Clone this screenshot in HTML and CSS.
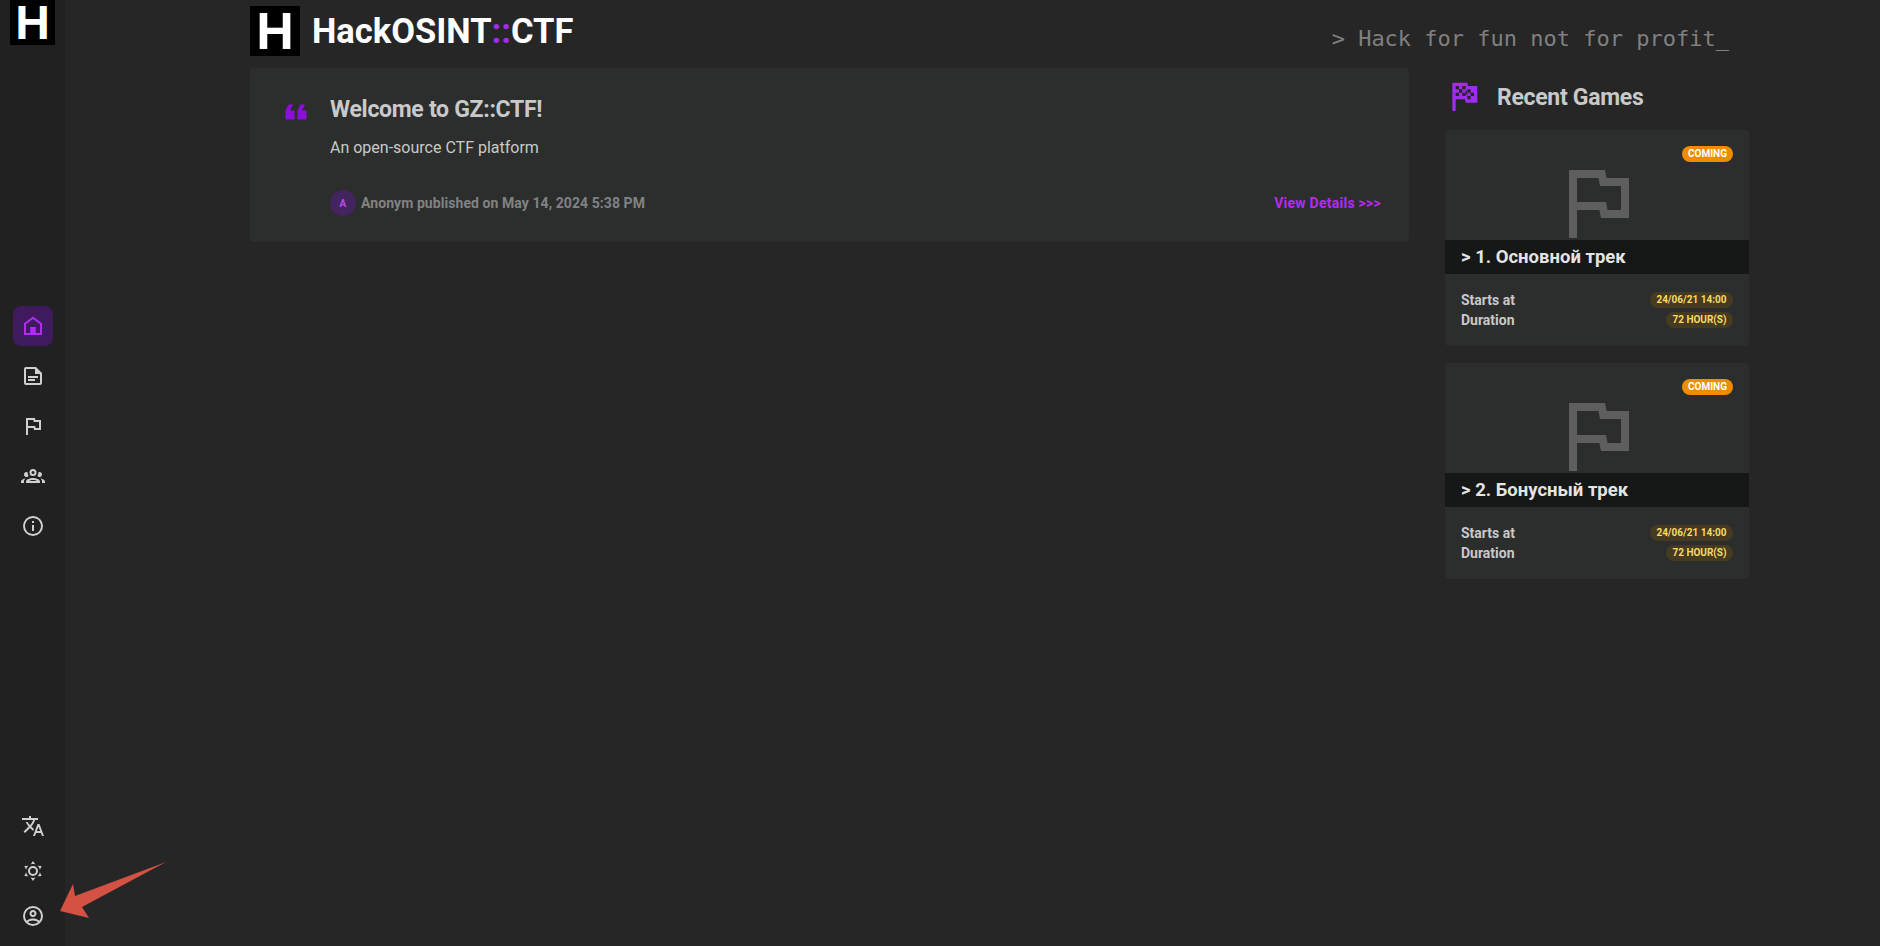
FILE: index.html
```html
<!DOCTYPE html>
<html lang="en">
<head>
  <meta charset="UTF-8">
  <meta name="viewport" content="width=device-width, initial-scale=1.0">
  <title>HackOSINT::CTF</title>
  <link rel="stylesheet" href="styles.css">
</head>
<body>
  <!-- Sidebar -->
  <nav class="sidebar">
    <div class="side-logo"><span>H</span></div>

    <div class="side-menu">
      <a class="side-btn active" href="#">
        <svg viewBox="0 0 24 24"><path fill-rule="evenodd" d="M12 2.5L21 9.2V21H3V9.2L12 2.5M12 5L5 10.2V19H9.5V13H14.5V19H19V10.2L12 5Z"/><path d="M9.5 13H14.5V19H9.5Z"/></svg>
      </a>
      <a class="side-btn" href="#">
        <svg viewBox="0 0 24 24"><path d="M15,3H5A2,2 0 0,0 3,5V19A2,2 0 0,0 5,21H19A2,2 0 0,0 21,19V9L15,3M19,19H5V5H14V10H19M17,14H7V12H17M14,17H7V15H14"/></svg>
      </a>
      <a class="side-btn" href="#">
        <svg viewBox="0 0 24 24"><path d="M12.36,6L12.76,8H18V14H14.64L14.24,12H7V6H12.36M14,4H5V21H7V14H12.6L13,16H20V6H14.4"/></svg>
      </a>
      <a class="side-btn" href="#">
        <svg viewBox="0 0 24 24"><path d="M12,5A3.5,3.5 0 0,0 8.5,8.5A3.5,3.5 0 0,0 12,12A3.5,3.5 0 0,0 15.5,8.5A3.5,3.5 0 0,0 12,5M12,7A1.5,1.5 0 0,1 13.5,8.5A1.5,1.5 0 0,1 12,10A1.5,1.5 0 0,1 10.5,8.5A1.5,1.5 0 0,1 12,7M5.5,8A2.5,2.5 0 0,0 3,10.5C3,11.44 3.53,12.25 4.29,12.68C4.65,12.88 5.06,13 5.5,13C5.94,13 6.35,12.88 6.71,12.68C7.08,12.47 7.39,12.17 7.62,11.81C6.89,10.86 6.5,9.7 6.5,8.5C6.5,8.41 6.5,8.31 6.5,8.22C6.2,8.08 5.86,8 5.5,8M18.5,8C18.14,8 17.8,8.08 17.5,8.22C17.5,8.31 17.5,8.41 17.5,8.5C17.5,9.7 17.11,10.86 16.38,11.81C16.5,12 16.63,12.15 16.78,12.3C16.94,12.45 17.1,12.58 17.29,12.68C17.65,12.88 18.06,13 18.5,13C18.94,13 19.35,12.88 19.71,12.68C20.47,12.25 21,11.44 21,10.5A2.5,2.5 0 0,0 18.5,8M12,14C9.66,14 5,15.17 5,17.5V19H19V17.5C19,15.17 14.34,14 12,14M4.71,14.55C2.78,14.78 0,15.76 0,17.5V19H3V17.07C3,16.06 3.69,15.22 4.71,14.55M19.29,14.55C20.31,15.22 21,16.06 21,17.07V19H24V17.5C24,15.76 21.22,14.78 19.29,14.55M12,16C13.53,16 15.24,16.5 16.23,17H7.77C8.76,16.5 10.47,16 12,16Z"/></svg>
      </a>
      <a class="side-btn" href="#">
        <svg viewBox="0 0 24 24"><path d="M11,9H13V7H11M12,20C7.59,20 4,16.41 4,12C4,7.59 7.59,4 12,4C16.41,4 20,7.59 20,12C20,16.41 16.41,20 12,20M12,2A10,10 0 0,0 2,12A10,10 0 0,0 12,22A10,10 0 0,0 22,12A10,10 0 0,0 12,2M11,17H13V11H11V17Z"/></svg>
      </a>
    </div>

    <div class="side-bottom">
      <a class="side-btn small" href="#">
        <svg viewBox="0 0 24 24"><path d="M12.87,15.07L10.33,12.56L10.36,12.53C12.1,10.59 13.34,8.36 14.07,6H17V4H10V2H8V4H1V6H12.17C11.5,7.92 10.44,9.75 9,11.35C8.07,10.32 7.3,9.19 6.69,8H4.69C5.42,9.63 6.42,11.17 7.67,12.56L2.58,17.58L4,19L9,14L12.11,17.11L12.87,15.07M18.5,10H16.5L12,22H14L15.12,19H19.87L21,22H23L18.5,10M15.88,17L17.5,12.67L19.12,17H15.88Z"/></svg>
      </a>
      <a class="side-btn small" href="#">
        <svg viewBox="0 0 24 24"><path d="M12,7A5,5 0 0,1 17,12A5,5 0 0,1 12,17A5,5 0 0,1 7,12A5,5 0 0,1 12,7M12,9A3,3 0 0,0 9,12A3,3 0 0,0 12,15A3,3 0 0,0 15,12A3,3 0 0,0 12,9M12,2L14.39,5.42C13.65,5.15 12.84,5 12,5C11.16,5 10.35,5.15 9.61,5.42L12,2M3.34,7L7.5,6.65C6.9,7.16 6.36,7.78 5.94,8.5C5.5,9.24 5.25,10 5.11,10.79L3.34,7M3.36,17L5.12,13.23C5.26,14 5.53,14.78 5.95,15.5C6.37,16.24 6.91,16.86 7.5,17.37L3.36,17M20.65,7L18.88,10.79C18.74,10 18.47,9.23 18.05,8.5C17.63,7.78 17.1,7.15 16.5,6.64L20.65,7M20.64,17L16.5,17.36C17.09,16.85 17.62,16.22 18.04,15.5C18.46,14.77 18.73,14 18.87,13.21L20.64,17M12,22L9.59,18.56C10.33,18.83 11.14,19 12,19C12.82,19 13.63,18.83 14.37,18.56L12,22Z"/></svg>
      </a>
      <a class="side-btn small" href="#">
        <svg viewBox="0 0 24 24"><path d="M12,2A10,10 0 0,0 2,12A10,10 0 0,0 12,22A10,10 0 0,0 22,12A10,10 0 0,0 12,2M7.07,18.28C7.5,17.38 10.12,16.5 12,16.5C13.88,16.5 16.5,17.38 16.93,18.28C15.57,19.36 13.86,20 12,20C10.14,20 8.43,19.36 7.07,18.28M18.36,16.83C16.93,15.09 13.46,14.5 12,14.5C10.54,14.5 7.07,15.09 5.64,16.83C4.62,15.5 4,13.82 4,12C4,7.59 7.59,4 12,4C16.41,4 20,7.59 20,12C20,13.82 19.38,15.5 18.36,16.83M12,6C10.06,6 8.5,7.56 8.5,9.5C8.5,11.44 10.06,13 12,13C13.94,13 15.5,11.44 15.5,9.5C15.5,7.56 13.94,6 12,6M12,11A1.5,1.5 0 0,1 10.5,9.5A1.5,1.5 0 0,1 12,8A1.5,1.5 0 0,1 13.5,9.5A1.5,1.5 0 0,1 12,11Z"/></svg>
      </a>
    </div>
  </nav>

  <main class="page">
    <!-- Header -->
    <header class="top">
      <div class="brand">
        <div class="brand-logo"><span>H</span></div>
        <h1>HackOSINT<span class="accent">::</span>CTF</h1>
      </div>
      <div class="motto">&gt; Hack for fun not for profit_</div>
    </header>

    <div class="columns">
      <!-- News -->
      <section class="news">
        <article class="post">
          <svg class="quote" viewBox="0 0 24 24"><path d="M10,7L8,11H11V17H5V11L7,7H10M18,7L16,11H19V17H13V11L15,7H18Z"/></svg>
          <div class="post-body">
            <h2>Welcome to GZ::CTF!</h2>
            <p>An open-source CTF platform</p>
            <div class="post-foot">
              <div class="author">
                <span class="avatar">A</span>
                <span>Anonym published on May 14, 2024 5:38 PM</span>
              </div>
              <a class="details" href="#">View Details &gt;&gt;&gt;</a>
            </div>
          </div>
        </article>
      </section>

      <!-- Recent games -->
      <aside class="recent">
        <div class="recent-title">
          <svg viewBox="0 0 24 24"><path d="M14.4,6H20V16H13L12.6,14H7V21H5V4H14L14.4,6M14,14H16V12H18V10H16V8H14V10L13,8V6H11V8H9V6H7V8H9V10H7V12H9V10H11V12H13V10L14,12V14M11,10V8H13V10H11M14,10H16V12H14V10Z"/></svg>
          <h3>Recent Games</h3>
        </div>

        <div class="game">
          <div class="poster">
            <svg class="poster-flag" viewBox="0 0 24 24"><path d="M12.36,6L12.76,8H18V14H14.64L14.24,12H7V6H12.36M14,4H5V21H7V14H12.6L13,16H20V6H14.4"/></svg>
            <span class="status">Coming</span>
            <div class="game-name">&gt; 1. Основной трек</div>
          </div>
          <div class="game-info">
            <div class="row"><span>Starts at</span><span class="pill">24/06/21 14:00</span></div>
            <div class="row"><span>Duration</span><span class="pill">72 HOUR(S)</span></div>
          </div>
        </div>

        <div class="game">
          <div class="poster">
            <svg class="poster-flag" viewBox="0 0 24 24"><path d="M12.36,6L12.76,8H18V14H14.64L14.24,12H7V6H12.36M14,4H5V21H7V14H12.6L13,16H20V6H14.4"/></svg>
            <span class="status">Coming</span>
            <div class="game-name">&gt; 2. Бонусный трек</div>
          </div>
          <div class="game-info">
            <div class="row"><span>Starts at</span><span class="pill">24/06/21 14:00</span></div>
            <div class="row"><span>Duration</span><span class="pill">72 HOUR(S)</span></div>
          </div>
        </div>
      </aside>
    </div>
  </main>

  <!-- Annotation arrow drawn over the screenshot -->
  <svg class="arrow" viewBox="0 0 107 58"><path d="M106 1L15 35L13 23L0 50L29 57L22 46Z"/></svg>
</body>
</html>
```

FILE: styles.css
```css
* {
  box-sizing: border-box;
}

body {
  margin: 0;
  height: 946px;
  overflow: hidden;
  display: flex;
  background-color: #262626;
  color: #c9c9c9;
  font-family: Roboto, "Noto Sans", sans-serif;
}

h1, h2, h3, p {
  margin: 0;
}

a {
  text-decoration: none;
  color: inherit;
}

/* Sidebar */
.sidebar {
  width: 65px;
  flex: none;
  height: 100%;
  background-color: #212121;
  display: flex;
  flex-direction: column;
  justify-content: space-between;
  align-items: center;
  padding-bottom: 8px;
}

.side-logo {
  width: 45px;
  height: 45px;
  background-color: #000;
  display: flex;
  align-items: center;
  justify-content: center;
}

.side-logo span {
  color: #fff;
  font-family: "Liberation Sans", sans-serif;
  font-weight: 700;
  font-size: 48px;
  line-height: 45px;
}

.side-menu {
  display: flex;
  flex-direction: column;
  gap: 10px;
  margin-top: 4px;
}

.side-btn {
  width: 40px;
  height: 40px;
  border-radius: 8px;
  display: flex;
  align-items: center;
  justify-content: center;
}

.side-btn svg {
  width: 24px;
  height: 24px;
  fill: #d0d0d0;
}

.side-btn.active {
  background-color: #3f1a5c;
}

.side-btn.active svg {
  fill: #b02cf5;
}

.side-btn.small {
  height: 45px;
}

/* Page */
.page {
  width: 1500px;
  margin-left: 185px;
  flex: none;
}

.top {
  height: 68px;
  display: flex;
  justify-content: space-between;
  align-items: flex-start;
}

.brand {
  display: flex;
  align-items: center;
  gap: 12px;
  margin-top: 6px;
}

.brand-logo {
  width: 50px;
  height: 50px;
  background-color: #000;
  display: flex;
  align-items: center;
  justify-content: center;
}

.brand-logo span {
  color: #fff;
  font-family: "Liberation Sans", sans-serif;
  font-weight: 700;
  font-size: 52px;
  line-height: 50px;
}

.brand h1 {
  color: #fff;
  font-size: 34.5px;
  font-weight: 700;
  line-height: 50px;
  margin-top: -1px;
}

.accent {
  color: #a02cf0;
}

.motto {
  margin-top: 24px;
  margin-right: 21px;
  font-family: "DejaVu Sans Mono", monospace;
  font-size: 22px;
  line-height: 30px;
  color: #808080;
}

.columns {
  display: flex;
  gap: 36px;
  align-items: flex-start;
}

/* News */
.news {
  width: 1159px;
  flex: none;
}

.post {
  height: 174px;
  background-color: #2c2e2e;
  border-radius: 4px;
  padding: 27px 28px 0 0;
  display: flex;
}

.quote {
  width: 36px;
  height: 36px;
  margin: -1px 16px 0 28px;
  flex: none;
  fill: #8a0fdc;
}

.post-body {
  flex: 1;
}

.post h2 {
  font-size: 23px;
  line-height: 30px;
  font-weight: 700;
  letter-spacing: -0.3px;
  color: #c9c9c9;
}

.post p {
  margin-top: 11px;
  font-size: 16px;
  line-height: 24px;
  color: #c9c9c9;
}

.post-foot {
  margin-top: 30px;
  display: flex;
  justify-content: space-between;
  align-items: center;
  font-size: 14px;
  font-weight: 700;
  letter-spacing: 0.07px;
}

.author {
  display: flex;
  align-items: center;
  gap: 5px;
  color: #828282;
}

.avatar {
  width: 26px;
  height: 26px;
  border-radius: 50%;
  background-color: #42245f;
  color: #b84cf0;
  font-size: 10px;
  display: flex;
  align-items: center;
  justify-content: center;
}

.details {
  color: #b32cf0;
  letter-spacing: 0.25px;
}

/* Recent games */
.recent {
  width: 304px;
  flex: none;
}

.recent-title {
  height: 62px;
  display: flex;
  align-items: center;
  gap: 13px;
  margin-left: -1px;
  padding-bottom: 4px;
}

.recent-title svg {
  width: 40px;
  height: 40px;
  fill: #a02cf0;
  margin-top: -3px;
}

.recent-title h3 {
  font-size: 23px;
  font-weight: 700;
  letter-spacing: -0.3px;
  color: #c9c9c9;
}

.game {
  height: 216px;
  margin-bottom: 17px;
  background-color: #2c2e2e;
  border-radius: 4px;
  overflow: hidden;
}

.poster {
  position: relative;
  height: 144px;
  display: flex;
  align-items: center;
  justify-content: center;
}

.poster-flag {
  width: 96px;
  height: 96px;
  fill: #5e5e5e;
}

.status {
  position: absolute;
  top: 16px;
  right: 16px;
  height: 16px;
  padding: 0 6px;
  border-radius: 8px;
  background-color: #f08c00;
  color: #fff;
  font-size: 10px;
  font-weight: 700;
  line-height: 16px;
  text-transform: uppercase;
}

.game-name {
  position: absolute;
  left: 0;
  right: 0;
  bottom: 0;
  height: 34px;
  padding-left: 16px;
  background-color: #161717;
  color: #e4e4e4;
  font-size: 18.5px;
  font-weight: 700;
  line-height: 34px;
}

.game-info {
  padding: 16px 16px 0 16px;
  font-size: 14px;
  font-weight: 700;
}

.row {
  height: 20px;
  display: flex;
  justify-content: space-between;
  align-items: center;
}

.pill {
  height: 16px;
  padding: 0 6.5px;
  border-radius: 8px;
  background-color: #463b20;
  color: #f8da63;
  font-size: 10px;
  line-height: 16px;
}

/* Arrow annotation */
.arrow {
  position: absolute;
  left: 60px;
  top: 861px;
  width: 107px;
  height: 58px;
  fill: #d35244;
}
```
